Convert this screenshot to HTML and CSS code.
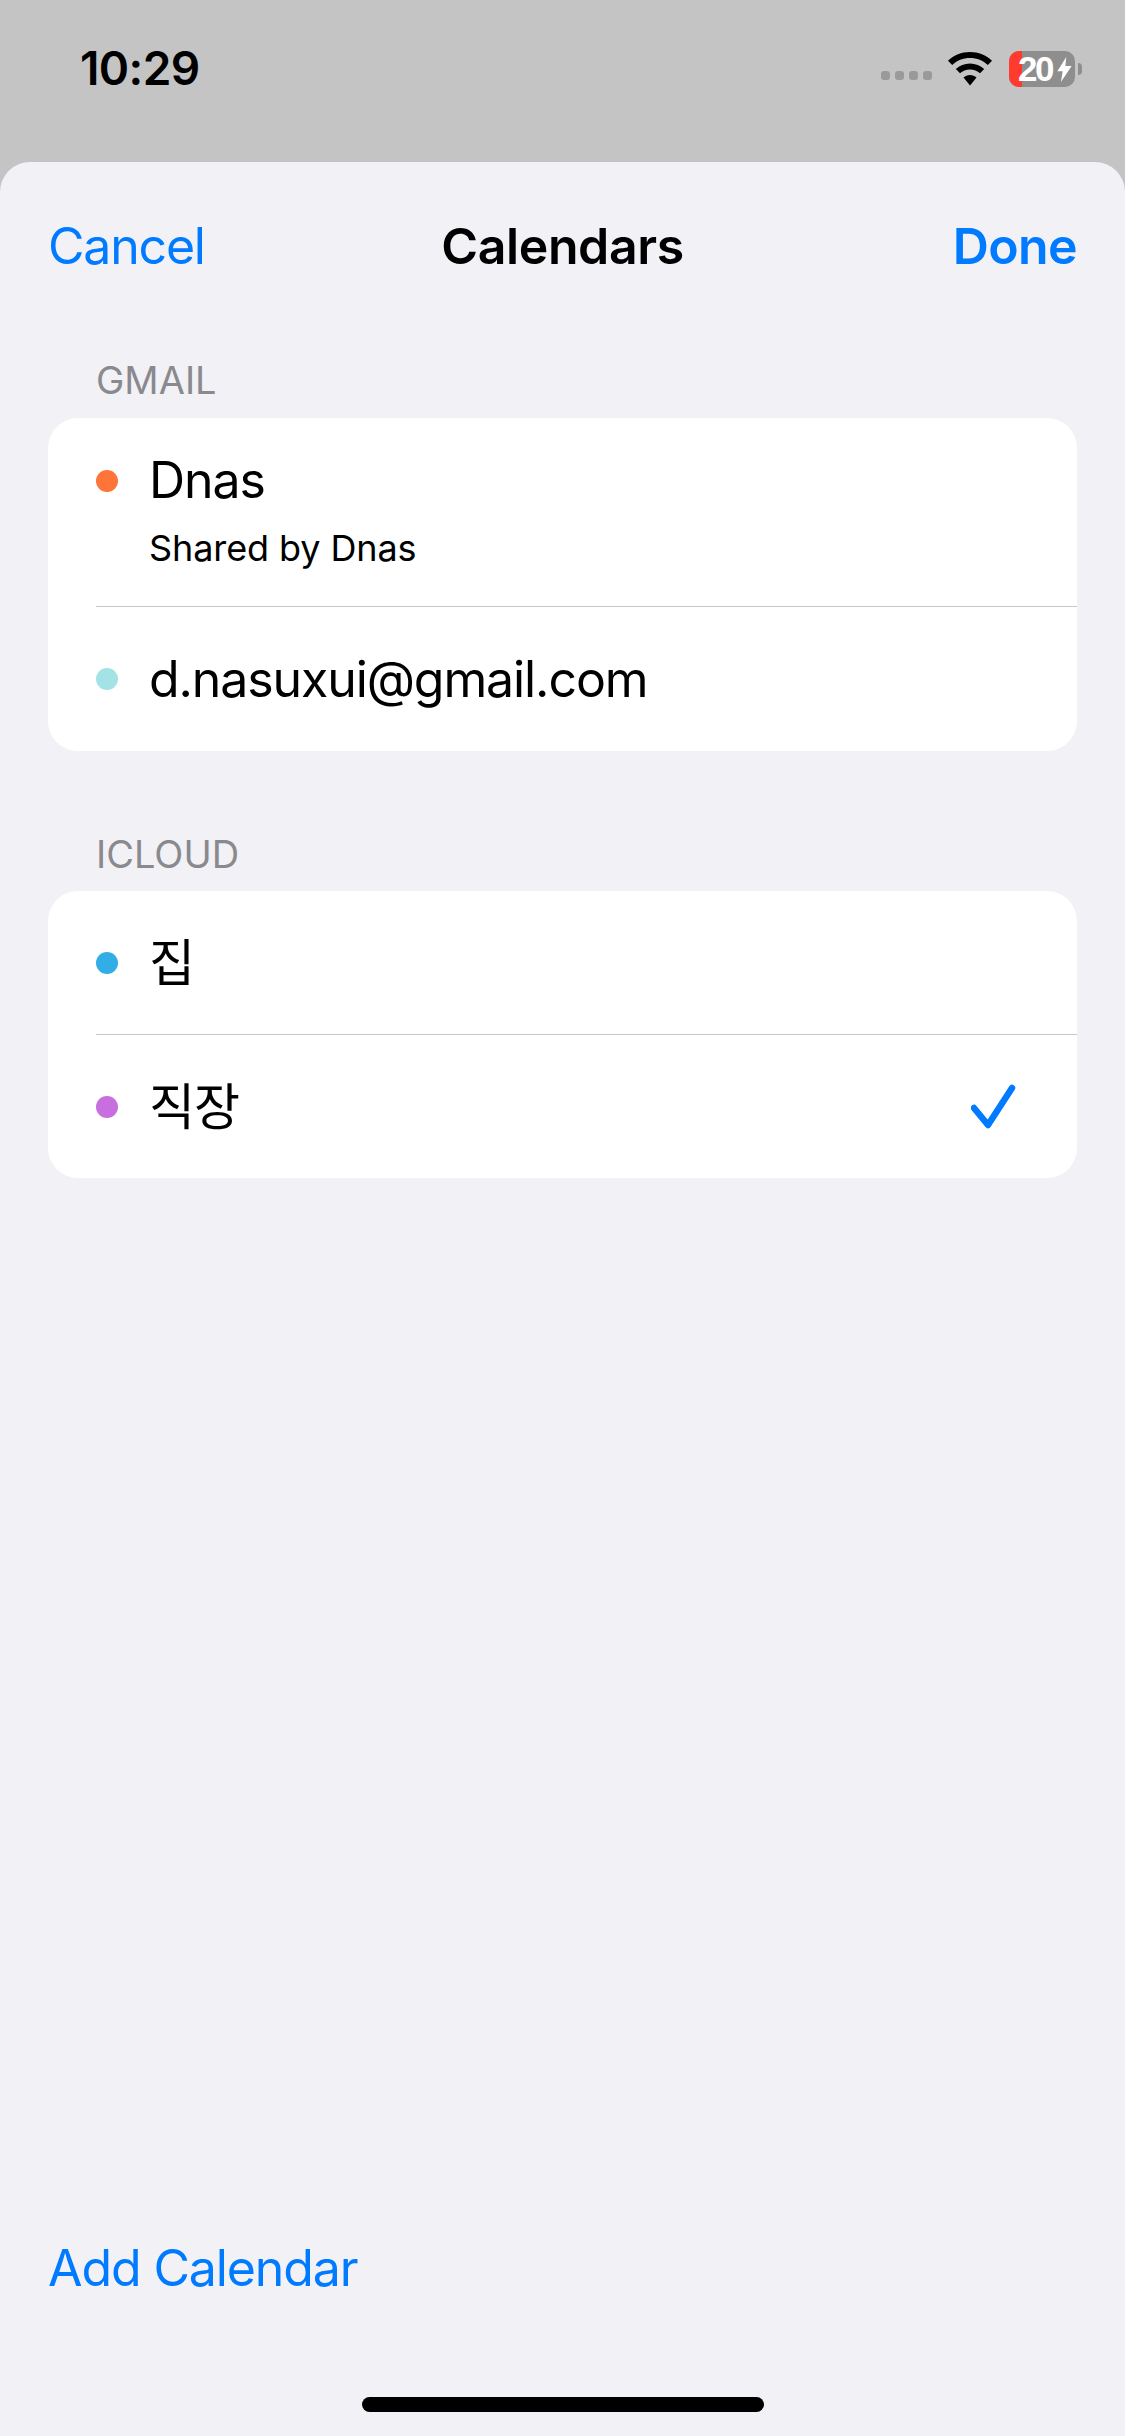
FILE: index.html
```html
<!DOCTYPE html>
<html>
<head>
<title>Calendars</title>
<link rel="stylesheet" href="styles.css">
</head>
<body>

<div class="statusbar">
	<span class="time">10:29</span>
	<div class="status-icons">
		<div class="signal"><i></i><i></i><i></i><i></i></div>
		<svg class="wifi" width="46" height="34" viewBox="0 0 46 34">
			<path d="M23 0C14.500 0 6.800 3.300 1 8.800L5.200 13C9.900 8.600 16.100 6 23 6s13.100 2.600 17.800 7L45 8.800C39.200 3.300 31.500 0 23 0z"/>
			<path d="M23 11.500c-5.500 0-10.500 2.100-14.200 5.600l4.200 4.200c2.600-2.400 6.100-3.900 10-3.900s7.400 1.500 10 3.900l4.200-4.200C33.500 13.600 28.500 11.500 23 11.500z"/>
			<path d="M23 23c-2.500 0-4.800 1-6.500 2.500L23 33.500l6.500-8C27.800 24 25.500 23 23 23z"/>
		</svg>
		<div class="battery">
			<div class="battery-body">
				<div class="battery-fill"></div>
				<span class="battery-text">20</span>
				<svg class="bolt" width="15" height="25" viewBox="0 0 16 28"><path d="M10 0L0 16h6L4 28 16 10H9z"/></svg>
			</div>
			<div class="battery-nub"></div>
		</div>
	</div>
</div>

<div class="sheet">
	<div class="navbar">
		<span class="nav-side nav-btn">Cancel</span>
		<span class="nav-title">Calendars</span>
		<span class="nav-side nav-btn nav-done">Done</span>
	</div>

	<div class="section-label label-gmail">GMAIL</div>
	<div class="group">
		<div class="row row-tall">
			<span class="dot dot-orange dot-top"></span>
			<div class="row-text">
				<div class="row-name">Dnas</div>
				<div class="row-sub">Shared by Dnas</div>
			</div>
		</div>
		<div class="row row-last">
			<span class="dot dot-aqua"></span>
			<div class="row-name">d.nasuxui@gmail.com</div>
		</div>
	</div>

	<div class="section-label label-icloud">ICLOUD</div>
	<div class="group">
		<div class="row">
			<span class="dot dot-blue"></span>
			<div class="row-name">집</div>
		</div>
		<div class="row">
			<span class="dot dot-purple"></span>
			<div class="row-name">직장</div>
			<svg class="check" width="50" height="50" viewBox="0 0 50 50">
				<path d="M3 26L17 43 41 6" fill="none" stroke="#007aff" stroke-width="6.500" stroke-linecap="round" stroke-linejoin="round"/>
			</svg>
		</div>
	</div>

	<div class="add-calendar">Add Calendar</div>
	<div class="home-indicator"></div>
</div>

</body>
</html>
```

FILE: styles.css
```css
* {
	box-sizing: border-box;
}

html, body {
	margin: 0;
	height: 2436px;
}

body {
	font-family: Inter, "Noto Sans CJK KR", sans-serif;
	background-color: #c4c4c4;
	color: #000;
	display: flex;
	flex-direction: column;
	overflow: hidden;
}

.statusbar {
	height: 162px;
	flex-shrink: 0;
	display: flex;
	justify-content: space-between;
	align-items: flex-start;
	padding: 42px 43px 0 80px;
}

.time {
	font-size: 46px;
	font-weight: 600;
	line-height: 52px;
	letter-spacing: -0.6px;
}

.status-icons {
	display: flex;
	align-items: center;
	padding-top: 9px;
}

.signal {
	display: flex;
	gap: 5px;
	margin-top: 12px;
	margin-right: 15px;
}

.signal i {
	width: 9px;
	height: 9px;
	border-radius: 3px;
	background-color: #9a9a9a;
}

.wifi {
	margin-right: 16px;
}

.battery {
	display: flex;
	align-items: center;
}

.battery-body {
	width: 66px;
	height: 36px;
	border-radius: 10px;
	background-color: #8e8e8e;
	position: relative;
	display: flex;
	align-items: center;
	padding-left: 9px;
}

.battery-fill {
	position: absolute;
	left: 0;
	top: 0;
	bottom: 0;
	width: 13px;
	border-radius: 10px 0 0 10px;
	background-color: #ff3b30;
}

.battery-text {
	position: relative;
	color: #fff;
	font-family: "Liberation Sans", sans-serif;
	font-size: 35px;
	font-weight: 700;
	line-height: 36px;
	letter-spacing: -2.500px;
}

.bolt {
	position: relative;
	fill: #fff;
	margin-left: 5px;
	flex-shrink: 0;
}

.battery-nub {
	width: 4px;
	height: 12px;
	margin-left: 3px;
	border-radius: 0 6px 6px 0;
	background-color: #8e8e8e;
}

.sheet {
	flex: 1;
	background-color: #f1f1f6;
	border-radius: 30px 30px 0 0;
	padding: 0 48px;
	display: flex;
	flex-direction: column;
}

.navbar {
	height: 168px;
	display: flex;
	justify-content: space-between;
	align-items: center;
}

.nav-side {
	flex: 1;
}

.nav-btn {
	font-size: 50px;
	letter-spacing: -1.2px;
	color: #007aff;
}

.nav-done {
	font-weight: 600;
	letter-spacing: -0.6px;
	text-align: right;
}

.nav-title {
	font-size: 50px;
	font-weight: 600;
	letter-spacing: -0.4px;
}

.section-label {
	font-size: 38px;
	line-height: 44px;
	color: #8a8a8e;
	padding-left: 48px;
}

.label-gmail {
	margin-top: 28px;
	margin-bottom: 16px;
}

.label-icloud {
	margin-top: 81px;
	margin-bottom: 15px;
}

.group {
	background-color: #fff;
	border-radius: 30px;
	overflow: hidden;
}

.row {
	height: 143px;
	display: flex;
	align-items: center;
	margin-left: 48px;
	padding-right: 56px;
}

.row + .row {
	height: 144px;
	border-top: 1px solid #c6c6c8;
}

.row-tall {
	height: 188px;
	align-items: flex-start;
}

.row + .row-last {
	height: 145px;
}

.dot {
	width: 22px;
	height: 22px;
	border-radius: 50%;
	margin-right: 31px;
	flex-shrink: 0;
}

.dot-top {
	margin-top: 52px;
}

.dot-orange {
	background-color: #ff7438;
}

.dot-aqua {
	background-color: #a3e3e6;
}

.dot-blue {
	background-color: #32ade6;
}

.dot-purple {
	background-color: #c86fdf;
}

.row-name {
	font-size: 50px;
	line-height: 60px;
	letter-spacing: -1.1px;
}

.row-text {
	padding-top: 32px;
}

.row-sub {
	font-size: 36px;
	line-height: 40px;
	letter-spacing: -0.1px;
	margin-top: 18px;
}

.check {
	margin-left: auto;
}

.add-calendar {
	margin-top: auto;
	font-size: 50px;
	line-height: 60px;
	letter-spacing: -1.1px;
	color: #007aff;
}

.home-indicator {
	width: 402px;
	height: 15px;
	border-radius: 8px;
	background-color: #000;
	margin: 99px auto 24px;
}
```
